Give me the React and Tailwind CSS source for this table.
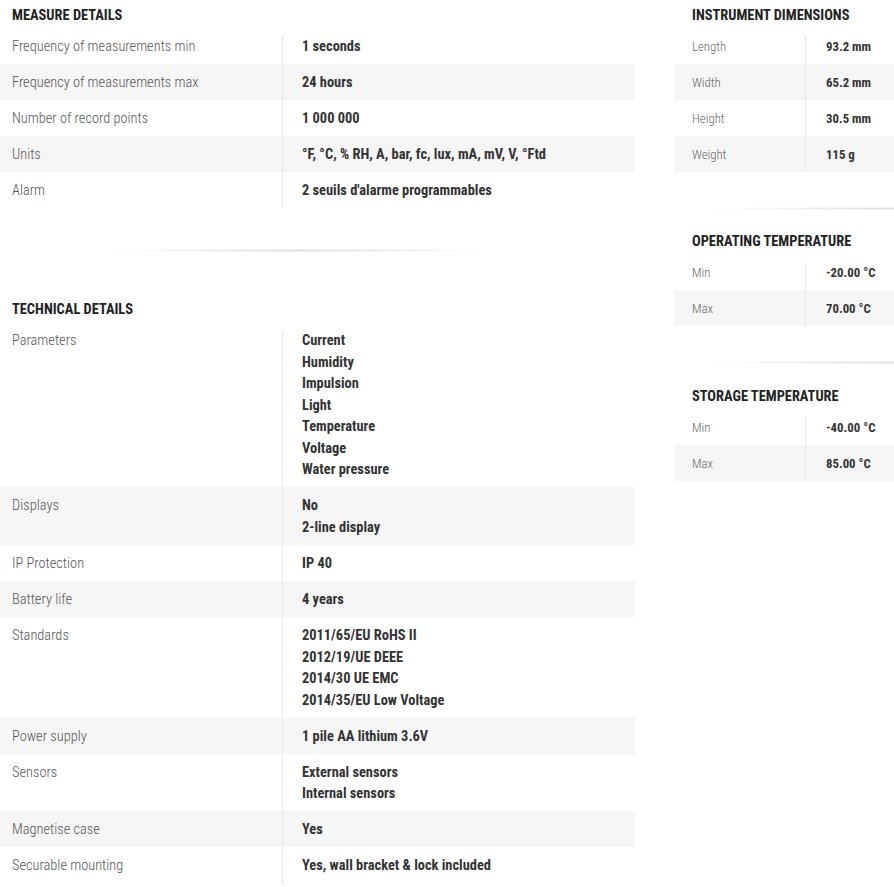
const font = { fontFamily: '"Roboto Condensed", "Liberation Sans Narrow", "DejaVu Sans Condensed", Roboto, sans-serif' }

const measureDetails = [
  ['Frequency of measurements min', ['1 seconds']],
  ['Frequency of measurements max', ['24 hours']],
  ['Number of record points', ['1 000 000']],
  ['Units', ['°F, °C, % RH, A, bar, fc, lux, mA, mV, V, °Ftd']],
  ['Alarm', ["2 seuils d'alarme programmables"]],
]

const technicalDetails = [
  ['Parameters', ['Current', 'Humidity', 'Impulsion', 'Light', 'Temperature', 'Voltage', 'Water pressure']],
  ['Displays', ['No', '2-line display']],
  ['IP Protection', ['IP 40']],
  ['Battery life', ['4 years']],
  ['Standards', ['2011/65/EU RoHS II', '2012/19/UE DEEE', '2014/30 UE EMC', '2014/35/EU Low Voltage']],
  ['Power supply', ['1 pile AA lithium 3.6V']],
  ['Sensors', ['External sensors', 'Internal sensors']],
  ['Magnetise case', ['Yes']],
  ['Securable mounting', ['Yes, wall bracket & lock included']],
]

const dimensions = [
  ['Length', ['93.2 mm']],
  ['Width', ['65.2 mm']],
  ['Height', ['30.5 mm']],
  ['Weight', ['115 g']],
]

const operating = [
  ['Min', ['-20.00 °C']],
  ['Max', ['70.00 °C']],
]

const storage = [
  ['Min', ['-40.00 °C']],
  ['Max', ['85.00 °C']],
]

function Heading({ children, className = '' }) {
  return (
    <h3 className={`h-[28px] pt-[7px] text-[14.4px] leading-[18px] font-bold uppercase text-[#222] ${className}`}>
      {children}
    </h3>
  )
}

function SpecTable({ rows, small = false }) {
  return (
    <div>
      {rows.map(([label, values], i) => (
        <div key={label} className={`flex ${i % 2 === 1 ? 'bg-[#f6f6f6]' : 'bg-white'}`}>
          <div
            className={
              small
                ? 'w-[131px] shrink-0 pt-[8px] pb-[6.4px] pl-[18px] text-[12.8px] leading-[21.6px] font-light text-[#666]'
                : 'w-[282px] shrink-0 pt-[8px] pb-[6.4px] pl-[12px] text-[14.4px] leading-[21.6px] font-light text-[#555]'
            }
          >
            {label}
          </div>
          <div
            className={
              small
                ? 'relative flex-1 pt-[8px] pb-[6.4px] pl-[21px] text-[12.8px] leading-[21.6px] font-bold text-[#333]'
                : 'relative flex-1 pt-[8px] pb-[6.4px] pl-[20px] text-[14.4px] leading-[21.6px] font-bold text-[#333]'
            }
          >
            <span className={`absolute left-0 bottom-0 w-px bg-[#e9e9e9] ${i === 0 ? 'top-[8px]' : 'top-0'}`} />
            {values.map((v) => (
              <div key={v}>{v}</div>
            ))}
          </div>
        </div>
      ))}
    </div>
  )
}

function Separator({ className }) {
  return (
    <div className={`h-[3px] bg-[radial-gradient(ellipse_at_center,#dedede_0%,#efefef_40%,rgba(255,255,255,0)_75%)] ${className}`} />
  )
}

export default function App() {
  return (
    <div className="w-[894px] h-[887px] overflow-hidden bg-white" style={font}>
      <div className="flex">
        <div className="w-[635px] shrink-0">
          <Heading className="pl-[12px]">Measure Details</Heading>
          <SpecTable rows={measureDetails} />
          <div className="h-[86px] pt-[41px]">
            <Separator className="ml-[113px] w-[370px]" />
          </div>
          <Heading className="pl-[12px]">Technical Details</Heading>
          <SpecTable rows={technicalDetails} />
        </div>
        <div className="ml-[39px] w-[262px] shrink-0">
          <Heading className="pl-[18px]">Instrument Dimensions</Heading>
          <SpecTable rows={dimensions} small />
          <div className="h-[54px] pt-[35px]">
            <Separator className="ml-[37px] w-[380px]" />
          </div>
          <Heading className="pl-[18px]">Operating Temperature</Heading>
          <SpecTable rows={operating} small />
          <div className="h-[55px] pt-[35px]">
            <Separator className="ml-[37px] w-[380px]" />
          </div>
          <Heading className="pl-[18px]">Storage Temperature</Heading>
          <SpecTable rows={storage} small />
        </div>
      </div>
    </div>
  )
}
